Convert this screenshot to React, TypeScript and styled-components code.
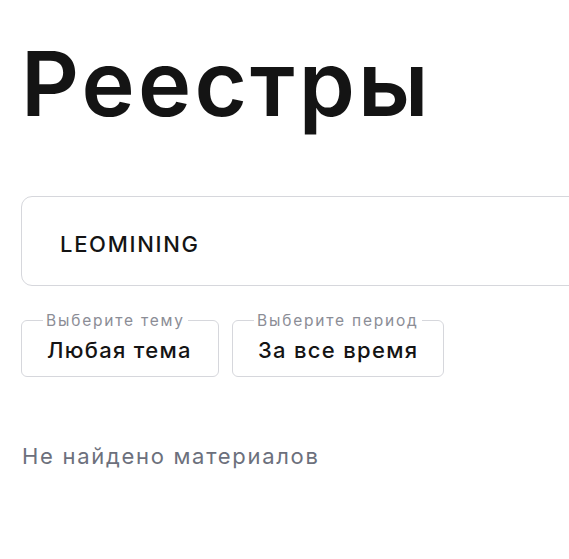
import React from 'react';
import styled, { createGlobalStyle } from 'styled-components';

const GlobalStyle = createGlobalStyle`
    html, body {
        margin:0;
        padding:0;
        background:#ffffff;
        overflow:hidden;
    }
    body {
        font-family: Inter, "DejaVu Sans", sans-serif;
    }
`;

const Page = styled.div`
    width:680px;
    padding:28px 0 0 21px;
    box-sizing:border-box;
`;

const Title = styled.h1`
    margin:0;
    font-family: Inter, sans-serif;
    font-size:90px;
    font-weight:600;
    line-height:112px;
    letter-spacing:3.2px;
    color:#141414;
`;

const SearchBox = styled.div`
    margin-top:56px;
    height:90px;
    border:1.5px solid #d6d7dc;
    border-radius:11px;
    display:flex;
    align-items:center;
    padding:6px 0 0 38px;
    box-sizing:border-box;
`;

const SearchInput = styled.input`
    border:none;
    outline:none;
    background:transparent;
    width:100%;
    padding:0;
    font-family: Inter, sans-serif;
    font-size:22px;
    font-weight:500;
    color:#141414;
    letter-spacing:1.7px;
`;

const Filters = styled.div`
    display:flex;
    gap:13px;
    margin-top:27px;
`;

const Filter = styled.fieldset<{ $width: number }>`
    margin:0;
    width:${p => p.$width}px;
    height:64px;
    box-sizing:border-box;
    border:1.5px solid #d6d7dc;
    border-radius:6px;
    padding:0 0 0 25px;
    display:flex;
    align-items:center;
`;

const FilterLabel = styled.legend`
    padding:0 3px;
    margin-left:-4px;
    font-size:15.5px;
    color:#8b8d96;
    line-height:15px;
    letter-spacing:1.8px;
`;

const FilterValue = styled.div`
    margin-top:-4px;
    font-size:22px;
    font-weight:500;
    color:#141414;
    letter-spacing:1.3px;
`;

const Empty = styled.p`
    margin:66px 0 0 1px;
    font-size:22px;
    color:#6c707c;
    letter-spacing:1.7px;
`;

const App: React.FC = () => {
    const filters = [
        { label: 'Выберите тему', value: 'Любая тема', width: 198 },
        { label: 'Выберите период', value: 'За все время', width: 212 },
    ];

    return (
        <Page>
            <GlobalStyle />
            <Title>Реестры</Title>
            <SearchBox>
                <SearchInput defaultValue="LEOMINING" />
            </SearchBox>
            <Filters>
                {filters.map(f => (
                    <Filter key={f.label} $width={f.width}>
                        <FilterLabel>{f.label}</FilterLabel>
                        <FilterValue>{f.value}</FilterValue>
                    </Filter>
                ))}
            </Filters>
            <Empty>Не найдено материалов</Empty>
        </Page>
    );
};

export default App;
